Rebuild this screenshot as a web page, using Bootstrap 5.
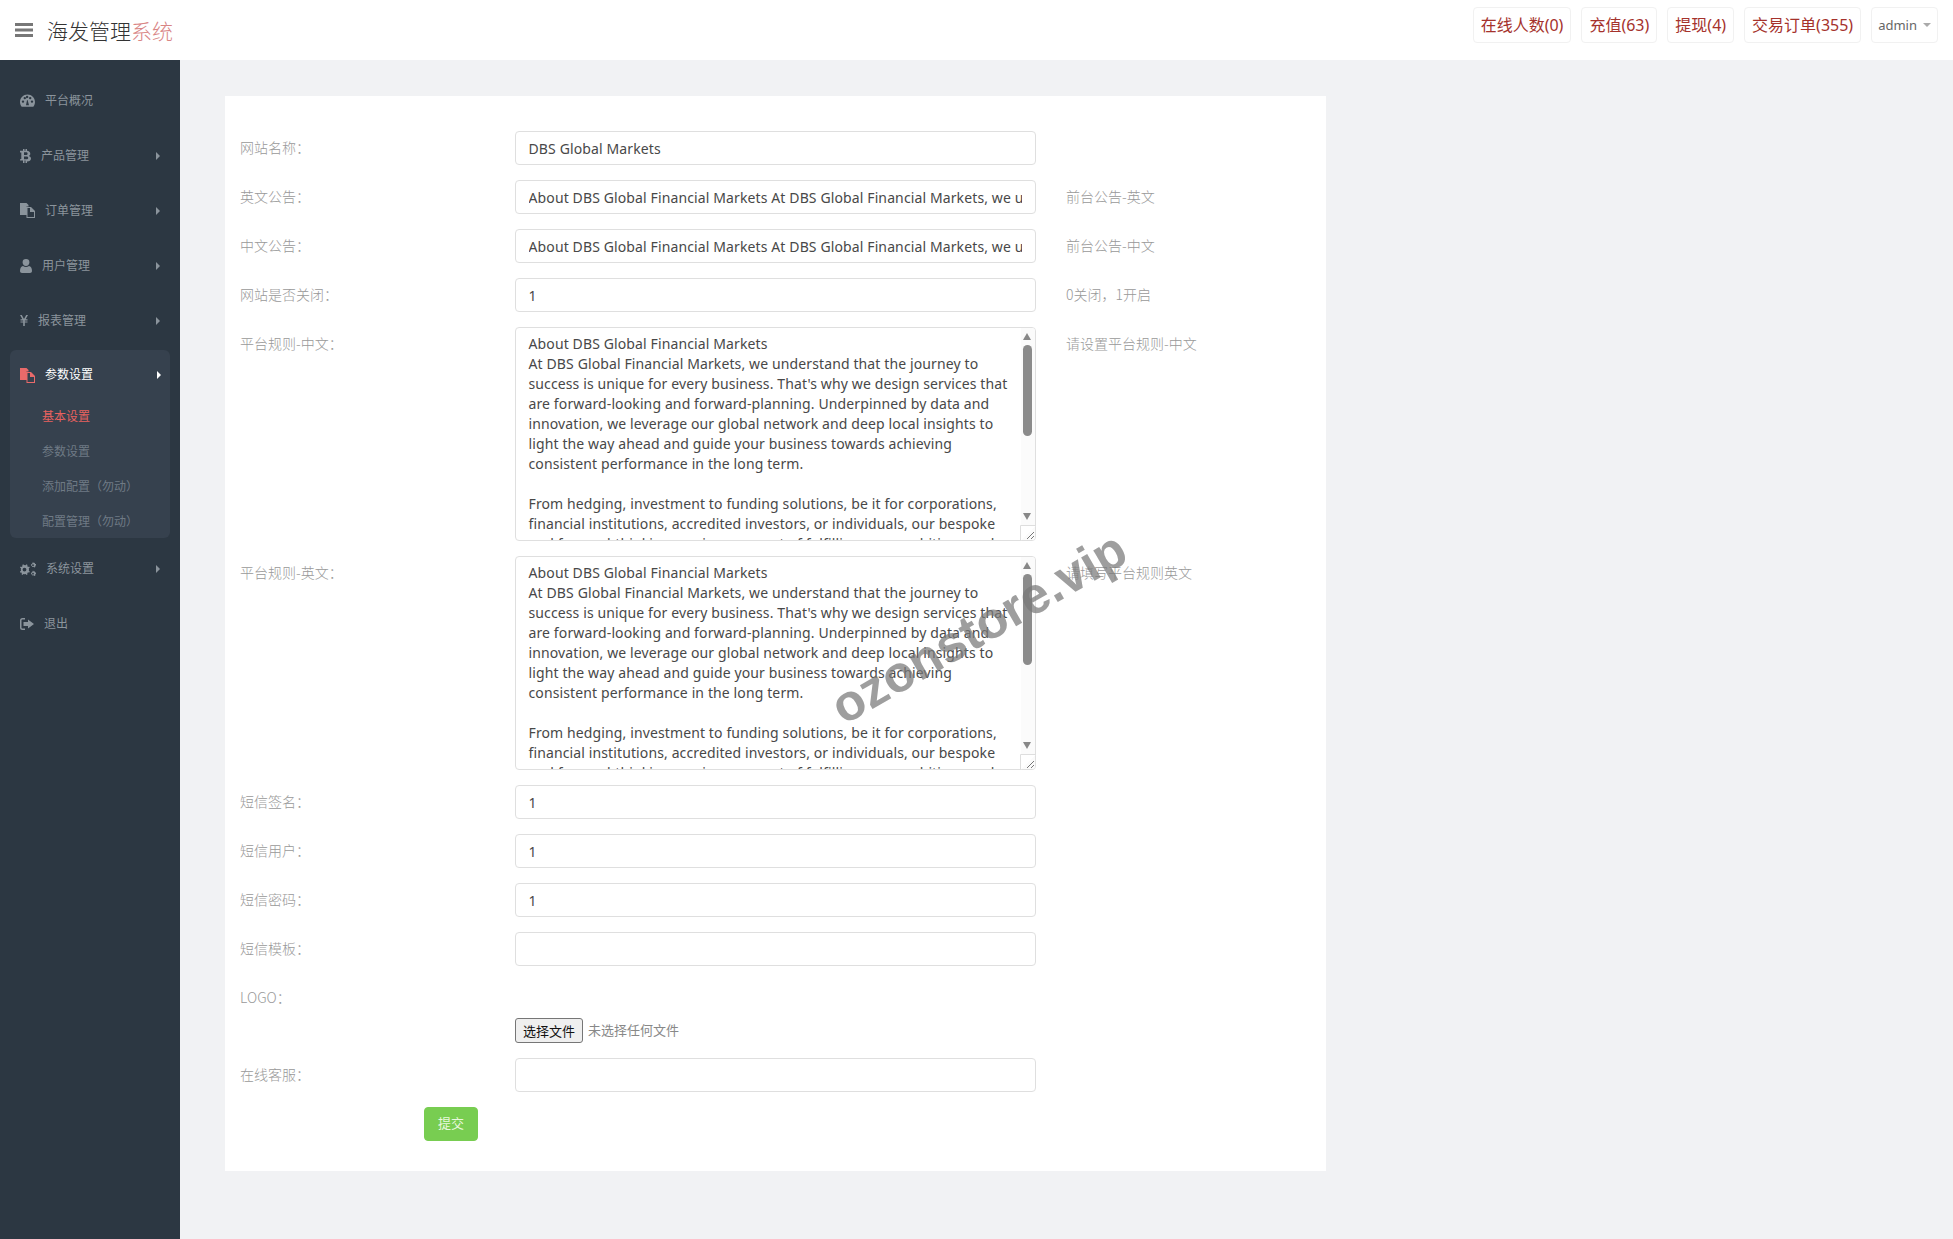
<!DOCTYPE html>
<html lang="zh-CN">
<head>
<meta charset="utf-8">
<title>海发管理系统</title>
<link rel="stylesheet" href="https://cdn.jsdelivr.net/npm/bootstrap@5.3.0/dist/css/bootstrap.min.css">
<style>
html,body{height:100%}
body{font-family:"Noto Sans","Noto Sans CJK SC",sans-serif;font-size:14px;background:#f1f2f4;color:#333;min-height:1239px;position:relative;overflow:hidden}
.top-bar{height:60px;background:#fff;padding:0 15px}
.logo-text{font-size:21px;font-weight:300;color:#333;margin-left:14px;line-height:57px;font-family:"Noto Sans CJK SC",sans-serif}
.logo-text span{color:#d98585}
.stat-group{gap:10px;align-self:flex-start;margin-top:7px}
.stat-btn{height:36px;border:1px solid #f1f1f1;border-radius:4px;background:#fff;color:#a5322c;font-size:16px;padding:0 7px;line-height:34px;display:block;text-decoration:none}
.stat-admin{color:#666;font-size:13px;padding:0 6px;display:flex;align-items:center;gap:6px}
.tiny-caret{display:block;width:0;height:0;border-left:4px solid transparent;border-right:4px solid transparent;border-top:4px solid #aaa}
.page-body{min-height:1179px}
.side-nav{width:180px;background:#2c3742;flex:none;padding-top:13px;align-self:stretch}
.side-item{display:flex;align-items:center;gap:10px;height:55px;padding-left:20px;padding-right:9px;color:#8b949c;font-size:12px;text-decoration:none}
.side-item svg{fill:currentColor;flex:none}
.side-item .arrow{margin-left:auto;width:0;height:0;border-top:4px solid transparent;border-bottom:4px solid transparent;border-left:4px solid #8b949c;margin-right:11px}
.side-group{background:#36414e;margin:2px 10px 3px;border-radius:6px;height:188px}
.side-group .side-item{height:50px;padding-left:10px;padding-right:0;color:#fff}
.side-group .side-item svg{color:#e96a6a}
.side-group .arrow{border-left-color:#fff;margin-right:9px}
.sub-list{margin-top:-1px}
.sub-link{display:flex;align-items:center;height:35px;padding-left:32px;font-size:12px;color:#6f7a85;text-decoration:none}
.sub-link.on{color:#e8615f}
.main-area{padding:36px 45px}
.form-panel{width:1101px;background:#fff;padding:35px 15px 30px}
.f-row{display:flex;margin-bottom:15px}
.f-label{width:275px;flex:none;color:#999;font-weight:300;line-height:32px;font-family:"Noto Sans CJK SC","Noto Sans",sans-serif}
.f-field{width:521px;flex:none;position:relative}
.f-help{margin-left:30px;color:#999;line-height:32px;font-weight:300;font-family:"Noto Sans CJK SC","Noto Sans",sans-serif}
.f-input.form-control{height:34px;border:1px solid #dfdfdf;border-radius:4px;padding:6px 13px 6px 12.500px;font-size:14px;line-height:20px;color:#484848;box-shadow:none;letter-spacing:.12px}
textarea.f-area.form-control{height:214px;min-height:214px;border:1px solid #dfdfdf;border-radius:4px;padding:6px 14px 0 12.500px;font-size:14px;line-height:20px;color:#484848;overflow:hidden;resize:none;display:block;letter-spacing:.12px}
.fake-bar{position:absolute;top:1px;right:1px;bottom:1px;width:14px;background:#fbfbfb;border-radius:0 3px 3px 0;pointer-events:none}
.fake-thumb{position:absolute;left:2px;top:17px;width:9px;height:91px;background:#8b8b8b;border-radius:5px}
.fake-up,.fake-down{position:absolute;left:2px;width:0;height:0;border-left:4.500px solid transparent;border-right:4.500px solid transparent}
.fake-up{top:5px;border-bottom:7px solid #888}
.fake-down{top:185px;border-top:7px solid #888}
.fake-grip{position:absolute;right:-1px;bottom:-1px;display:block}
.logo-row{margin-bottom:0;height:44px}
.file-line{display:flex;align-items:center;gap:5px;height:25px;margin-top:-7px;margin-bottom:15px;margin-left:275px;color:#888;font-size:13px}
.file-pick{height:25px;width:68px;padding:0;border:1px solid #767676;border-radius:3px;background:#efefef;color:#111;font-size:13px;line-height:22px}
.go-btn.btn{margin-left:184px;width:54px;height:34px;padding:0;background:#78cd51;border-color:#78cd51;color:#e9f8dd;font-size:13px;border-radius:4px;display:block}
.mark-text{position:absolute;left:813px;top:598px;font-family:"Liberation Sans",Arial,sans-serif;font-weight:700;font-size:51px;line-height:60px;color:rgba(120,120,120,.72);transform:rotate(-30deg);white-space:nowrap;pointer-events:none}
</style>
</head>
<body>
<header class="top-bar d-flex align-items-center">
  <svg width="18" height="14" viewBox="0 0 18 14" aria-hidden="true"><path fill="#777" d="M0 0h18v3H0zM0 5.500h18v3H0zM0 11h18v3H0z"/></svg>
  <div class="logo-text">海发管理<span>系统</span></div>
  <div class="ms-auto d-flex stat-group">
    <a class="stat-btn" href="#">在线人数(0)</a>
    <a class="stat-btn" href="#">充值(63)</a>
    <a class="stat-btn" href="#">提现(4)</a>
    <a class="stat-btn" href="#">交易订单(355)</a>
    <a class="stat-btn stat-admin" href="#">admin<i class="tiny-caret"></i></a>
  </div>
</header>
<div class="d-flex page-body">
  <nav class="side-nav">
    <a class="side-item" href="#"><svg width="15" height="13" viewBox="0 0 15 13"><path fill-rule="evenodd" d="M7.500 0.500C3.400 0.500 0 3.800 0 8c0 1.800.6 3.400 1.700 4.700h11.600C14.400 11.400 15 9.800 15 8c0-4.200-3.400-7.500-7.500-7.500zM3 8.800a1.200 1.200 0 1 1 0-2.400 1.200 1.200 0 0 1 0 2.400zm1.800-3.500a1.200 1.200 0 1 1 0-2.400 1.200 1.200 0 0 1 0 2.400zm2.700-1.200a1.200 1.200 0 1 1 0-2.300 1.200 1.200 0 0 1 0 2.300zM9 11.200H6l1-5 .6-.1zM10.200 5.300a1.200 1.200 0 1 1 0-2.400 1.200 1.200 0 0 1 0 2.400zm1.800 3.500a1.200 1.200 0 1 1 0-2.400 1.200 1.200 0 0 1 0 2.400z"/></svg>平台概况</a>
    <a class="side-item" href="#"><svg width="11" height="14" viewBox="0 0 11 14"><path fill-rule="evenodd" d="M3 0h1.500v1.700h1V0H7v1.800c2 .3 3.300 1.300 3.300 3 0 1-.5 1.700-1.400 2.100 1.300.4 2.100 1.300 2.100 2.500 0 2-1.500 2.900-4 3.100V14H5.500v-2.400h-1V14H3v-2.400H0l.3-1.700h1V3.400H0V1.700h3zM4 3.300v2.800h1.900c1 0 1.700-.5 1.700-1.400S6.900 3.300 5.900 3.300zm0 4.300v2.700h2.300c1.100 0 1.900-.4 1.900-1.300 0-1-.8-1.400-1.900-1.400z"/></svg>产品管理<i class="arrow"></i></a>
    <a class="side-item" href="#"><svg width="15" height="15" viewBox="0 0 15 15"><path fill-rule="evenodd" d="M0 0h6.500l2 2v1.500H6.500V12H0zM6.500 4H11l4 4v7H6.500zM7.500 5v9h6.500V9h-4V5z"/></svg>订单管理<i class="arrow"></i></a>
    <a class="side-item" href="#"><svg width="12" height="14" viewBox="0 0 12 14"><path d="M6 0a3.400 3.400 0 0 1 3.400 3.500C9.400 5.400 7.900 7 6 7S2.600 5.400 2.600 3.500A3.400 3.400 0 0 1 6 0zM0 12c0-3 1.200-4.800 3-5 .8.700 1.900 1 3 1s2.200-.3 3-1c1.800.2 3 2 3 5 0 1.200-.8 2-2 2H2c-1.200 0-2-.8-2-2z"/></svg>用户管理<i class="arrow"></i></a>
    <a class="side-item" href="#"><svg width="8" height="11" viewBox="0 0 8 11"><path d="M0 0h1.800L4 4l2.200-4H8L5.600 4.300H7.500v1.100H4.800v1h2.700v1.100H4.800V11H3.200V7.500H.5V6.400h2.700v-1H.5V4.300h1.900z"/></svg>报表管理<i class="arrow"></i></a>
    <div class="side-group">
      <a class="side-item" href="#"><svg width="15" height="15" viewBox="0 0 15 15"><path fill-rule="evenodd" d="M0 0h6.500l2 2v1.500H6.500V12H0zM6.500 4H11l4 4v7H6.500zM7.500 5v9h6.500V9h-4V5z"/></svg>参数设置<i class="arrow"></i></a>
      <div class="sub-list">
        <a class="sub-link on" href="#">基本设置</a>
        <a class="sub-link" href="#">参数设置</a>
        <a class="sub-link" href="#">添加配置（勿动）</a>
        <a class="sub-link" href="#">配置管理（勿动）</a>
      </div>
    </div>
    <a class="side-item" href="#"><svg width="16" height="14" viewBox="0 0 16 14"><path fill-rule="evenodd" d="M4.500 3l1.300.3.600-1 1.200.7-.4 1 .9.900 1-.4.700 1.200-1 .6.200 1.300-.2 1.200 1 .7-.7 1.200-1-.4-.9.900.4 1-1.200.7-.6-1-1.300.3-1.200-.3-.6 1-1.200-.7.400-1-.9-.9-1 .4L0 9.500l1-.7L.8 7.600 1 6.300l-1-.6.700-1.200 1 .4.900-.9-.4-1 1.200-.7.600 1zm0 2.700a1.900 1.900 0 1 0 0 3.800 1.900 1.900 0 0 0 0-3.800zM13 0l.7 1 1-.3.400 1.200 1 .2-.1 1.200-.8.600.2 1.100-1.100.5-.7-.7-1.200.2-.6-1L11 3.500l.2-1.200.9-.5zm0 2.300a.9.900 0 1 0 0 1.800.9.900 0 0 0 0-1.800zM13 8.500l.7 1 1-.3.400 1.200 1 .2-.1 1.200-.8.600.2 1.100-1.100.5-.7-.7-1.200.2-.6-1-.8-.5.200-1.200.9-.5zm0 2.300a.9.900 0 1 0 0 1.800.9.900 0 0 0 0-1.800z"/></svg>系统设置<i class="arrow"></i></a>
    <a class="side-item" href="#"><svg width="14" height="12" viewBox="0 0 14 12"><path d="M5 0v1.500H2.500c-.6 0-1 .4-1 1v7c0 .6.400 1 1 1H5V12H2.500A2.500 2.500 0 0 1 0 9.500v-7A2.500 2.500 0 0 1 2.500 0z"/><path d="M8 1.500L14 6l-6 4.500V8H3.500V4H8z"/></svg>退出</a>
  </nav>
  <main class="main-area flex-grow-1">
    <form class="form-panel">
      <div class="f-row"><div class="f-label">网站名称：</div><div class="f-field"><input class="form-control f-input" value="DBS Global Markets"></div></div>
      <div class="f-row"><div class="f-label">英文公告：</div><div class="f-field"><input class="form-control f-input" value="About DBS Global Financial Markets At DBS Global Financial Markets, we understand that the journey to success is unique for every business."></div><div class="f-help">前台公告-英文</div></div>
      <div class="f-row"><div class="f-label">中文公告：</div><div class="f-field"><input class="form-control f-input" value="About DBS Global Financial Markets At DBS Global Financial Markets, we understand that the journey to success is unique for every business."></div><div class="f-help">前台公告-中文</div></div>
      <div class="f-row"><div class="f-label">网站是否关闭：</div><div class="f-field"><input class="form-control f-input" value="1"></div><div class="f-help">0关闭，1开启</div></div>
      <div class="f-row"><div class="f-label">平台规则-中文：</div><div class="f-field"><textarea class="form-control f-area">About DBS Global Financial Markets
At DBS Global Financial Markets, we understand that the journey to success is unique for every business. That's why we design services that are forward-looking and forward-planning. Underpinned by data and innovation, we leverage our global network and deep local insights to light the way ahead and guide your business towards achieving consistent performance in the long term.

From hedging, investment to funding solutions, be it for corporations, financial institutions, accredited investors, or individuals, our bespoke and forward-thinking services are part of fulfilling your ambitions and goals in the market.</textarea><div class="fake-bar" aria-hidden="true"><i class="fake-up"></i><i class="fake-thumb"></i><i class="fake-down"></i><svg class="fake-grip" width="16" height="16" viewBox="0 0 16 16"><path d="M.5 16V.5H16" fill="#fff" stroke="#dedede"/><path d="M7 14l7-7M11 14l3-3" stroke="#777" fill="none"/></svg></div></div><div class="f-help">请设置平台规则-中文</div></div>
      <div class="f-row"><div class="f-label">平台规则-英文：</div><div class="f-field"><textarea class="form-control f-area">About DBS Global Financial Markets
At DBS Global Financial Markets, we understand that the journey to success is unique for every business. That's why we design services that are forward-looking and forward-planning. Underpinned by data and innovation, we leverage our global network and deep local insights to light the way ahead and guide your business towards achieving consistent performance in the long term.

From hedging, investment to funding solutions, be it for corporations, financial institutions, accredited investors, or individuals, our bespoke and forward-thinking services are part of fulfilling your ambitions and goals in the market.</textarea><div class="fake-bar" aria-hidden="true"><i class="fake-up"></i><i class="fake-thumb"></i><i class="fake-down"></i><svg class="fake-grip" width="16" height="16" viewBox="0 0 16 16"><path d="M.5 16V.5H16" fill="#fff" stroke="#dedede"/><path d="M7 14l7-7M11 14l3-3" stroke="#777" fill="none"/></svg></div></div><div class="f-help">请填写平台规则英文</div></div>
      <div class="f-row"><div class="f-label">短信签名：</div><div class="f-field"><input class="form-control f-input" value="1"></div></div>
      <div class="f-row"><div class="f-label">短信用户：</div><div class="f-field"><input class="form-control f-input" value="1"></div></div>
      <div class="f-row"><div class="f-label">短信密码：</div><div class="f-field"><input class="form-control f-input" value="1"></div></div>
      <div class="f-row"><div class="f-label">短信模板：</div><div class="f-field"><input class="form-control f-input" value=""></div></div>
      <div class="f-row logo-row"><div class="f-label">LOGO：</div></div>
      <div class="file-line"><button type="button" class="file-pick">选择文件</button><span>未选择任何文件</span></div>
      <div class="f-row"><div class="f-label">在线客服：</div><div class="f-field"><input class="form-control f-input" value=""></div></div>
      <button type="button" class="btn go-btn">提交</button>
    </form>
  </main>
</div>
<div class="mark-text">ozonstore.vip</div>
<script src="https://cdn.jsdelivr.net/npm/bootstrap@5.3.0/dist/js/bootstrap.bundle.min.js"></script>
</body>
</html>
